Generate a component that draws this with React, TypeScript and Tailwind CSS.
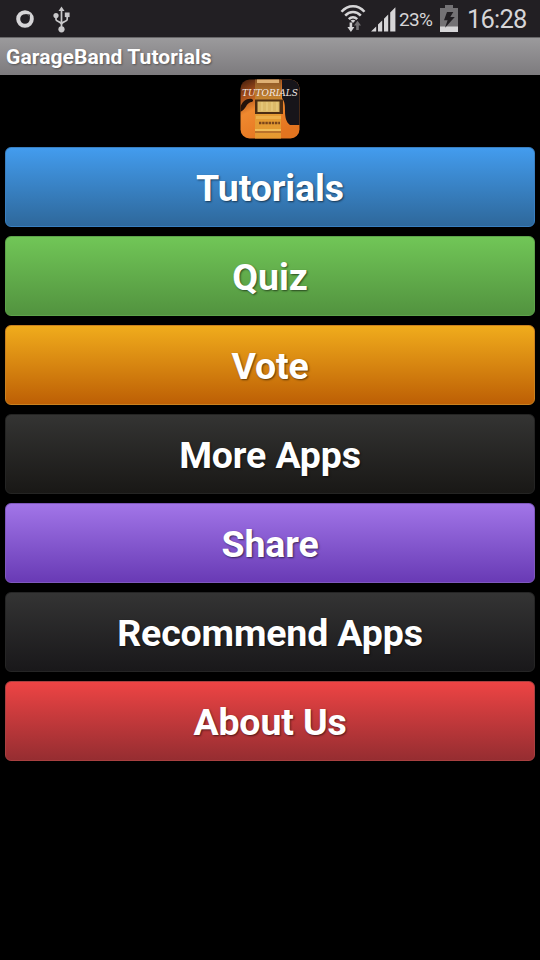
import clsx from 'clsx';

const MENU_ITEMS = [
  { label: 'Tutorials', className: 'border-[#397fc0] from-[#439cee] to-[#2e689b]' },
  { label: 'Quiz', className: 'border-[#5da34a] from-[#71c657] to-[#52933f]' },
  { label: 'Vote', className: 'border-[#c9801f] from-[#f0ac1c] to-[#bd5f05]' },
  { label: 'More Apps', className: 'border-[#242423] from-[#343433] to-[#191816]' },
  { label: 'Share', className: 'border-[#7e58bd] from-[#a275e8] to-[#693ab5]' },
  { label: 'Recommend Apps', className: 'border-[#252525] from-[#343434] to-[#19181a]' },
  { label: 'About Us', className: 'border-[#a84040] from-[#ee4444] to-[#962d31]' },
];

function RingIcon() {
  return (
    <svg width="18" height="18" viewBox="0 0 18 18" fill="none">
      <circle cx="9" cy="9" r="6.8" stroke="#d6d5d7" strokeWidth="4" />
      <path d="M9 4.2 14 4.6 13.6 9z" fill="#221f23" />
      <path d="m12.6 5.6 1.8-1.8" stroke="#8d8b8e" strokeWidth="0.8" />
    </svg>
  );
}

function UsbIcon() {
  return (
    <svg width="18" height="27" viewBox="0 0 18 27" fill="none" stroke="#c9c8ca" strokeWidth="1.7">
      <path d="M8.5 4v19M3 9.5v4c0 2 5.5 2 5.5 5M14.2 8.5v5c0 2-5.7 2-5.7 5" />
      <path d="M8.5 0.5 11.5 5H5.5z" fill="#c9c8ca" stroke="none" />
      <circle cx="3" cy="9.5" r="2.6" fill="#c9c8ca" stroke="none" />
      <path d="M11.8 6.5h4.8v4.6h-4.8z" fill="#c9c8ca" stroke="none" />
      <circle cx="8.5" cy="23.3" r="3.1" fill="#c9c8ca" stroke="none" />
    </svg>
  );
}

function WifiIcon() {
  return (
    <svg width="26" height="28" viewBox="0 0 26 28" fill="none">
      <g stroke="#d6d5d7" strokeWidth="2.5">
        <path d="M1.5 6.8C8-.6 18-.6 24.5 6.8" />
        <path d="M5.2 10.6c4.5-4.8 11.1-4.8 15.6 0" />
        <path d="M8.8 14.2c2.5-2.6 5.9-2.6 8.4 0" />
      </g>
      <path d="M10.6 15.6c1.5-1.2 3.3-1.2 4.8 0L13 18z" fill="#d6d5d7" />
      <path d="M9.6 17.5h2.6v4.6h2.2L10.9 27l-3.5-4.9h2.2z" fill="#d6d5d7" />
      <path d="M16.2 25v-4.4H14l3.5-4.8 3.5 4.8h-2.2V25z" fill="#747275" />
    </svg>
  );
}

function SignalIcon() {
  return (
    <svg width="25" height="25" viewBox="0 0 25 25" fill="#d6d5d7">
      <path d="M0 24.5 5.2 19.5v5zM7 17.5l4.2-4v11H7zM13 11.8l4.2-4.2v16.9H13zM19.2 5.5 24.4.3v24.2h-5.2z" />
    </svg>
  );
}

function BatteryIcon() {
  return (
    <svg width="18" height="27" viewBox="0 0 18 27">
      <path d="M5 0h8v3h5v24H0V3h5z" fill="#747275" />
      <path d="M0 21.5h18V27H0z" fill="#d6d5d7" />
      <path d="M7 7h6.3l-3 5h4.5L5 22.8l2.6-7.6H4z" fill="#211e22" />
    </svg>
  );
}

function StatusBar() {
  return (
    <div className="flex h-[37px] items-start bg-[#221f23] text-[#d6d5d7]">
      <div className="flex gap-[19px] pl-4">
        <div className="pt-[10px]">
          <RingIcon />
        </div>
        <div className="pt-[6px]">
          <UsbIcon />
        </div>
      </div>
      <div className="ml-auto flex">
        <div className="pt-[5px]">
          <WifiIcon />
        </div>
        <div className="ml-[5px] pt-[7px]">
          <SignalIcon />
        </div>
        <span className="ml-[3px] w-[33px] pt-[9px] text-[19px] leading-[22px] tracking-[-0.7px]">23%</span>
        <div className="ml-[8px] pt-[5px]">
          <BatteryIcon />
        </div>
        <span className="ml-[9px] w-[73px] pt-[5px] text-[25.5px] leading-7 tracking-[-0.8px]">16:28</span>
      </div>
    </div>
  );
}

function AppLogo() {
  return (
    <svg width="60" height="60" viewBox="0 0 60 60">
      <defs>
        <linearGradient id="body" x1="0" y1="0" x2="0.5" y2="1">
          <stop offset="0" stopColor="#3a1a0c" />
          <stop offset="0.25" stopColor="#a04a1a" />
          <stop offset="0.5" stopColor="#f0892f" />
          <stop offset="1" stopColor="#e2741f" />
        </linearGradient>
        <linearGradient id="neck" x1="0" y1="0" x2="0" y2="1">
          <stop offset="0" stopColor="#8a5426" />
          <stop offset="0.5" stopColor="#e39c35" />
          <stop offset="1" stopColor="#e59a30" />
        </linearGradient>
        <clipPath id="frame">
          <rect x="0.5" y="0.5" width="59" height="59" rx="9" />
        </clipPath>
      </defs>
      <g clipPath="url(#frame)">
        <rect width="60" height="60" fill="url(#body)" />
        <path d="M42 0h18v46H50c-4-3-5-8-5-14 0-5 0-9-3-13z" fill="#17151a" />
        <path d="M0 29c2-7 7-10 12-9 2 1 1 3-1 3-5 1-5 8-11 10z" fill="#24120a" />
        <path d="M15 0h26v60H15z" fill="url(#neck)" />
        <path d="M17 0h22v4H17z" fill="#dfb174" />
        <path d="M15 20.5h28V35H15z" fill="#4b2c12" />
        <path d="M17.5 22.5h22V33h-22z" fill="#dcb968" />
        <path d="M22 23v9M27 23v9M32 23v9M37 23v9" stroke="#efd68e" strokeWidth="0.8" />
        <path d="M16 37h25v3H16z" fill="#edb04a" />
        <path d="M19 44h21" stroke="#7a451b" strokeWidth="2.6" strokeDasharray="2.4 0.8" />
        <path d="M15 50h26v2H15z" fill="#f0bd59" />
        <path d="M15 52h26v2H15z" fill="#b8732a" />
      </g>
      <text
        x="2"
        y="17"
        textLength="56"
        lengthAdjust="spacingAndGlyphs"
        fill="#f3e9e4"
        className="font-['DejaVu_Serif',serif] text-[9.5px] italic"
      >
        TUTORIALS
      </text>
    </svg>
  );
}

export default function App() {
  return (
    <div className="flex h-[960px] w-[540px] flex-col overflow-hidden bg-black font-[Roboto,sans-serif]">
      <StatusBar />

      <header className="flex h-[38px] items-center border-t border-[#686769] bg-linear-to-b from-[#9b9a9c] to-[#7d7b7e] pl-[6px]">
        <h1 className="text-[21px] leading-6 font-bold tracking-[0.08px] text-white [text-shadow:1px_1px_2px_#00000060]">
          GarageBand Tutorials
        </h1>
      </header>

      <div className="flex justify-center pt-1">
        <AppLogo />
      </div>

      <nav className="flex flex-col gap-[9px] px-[5px] pt-2">
        {MENU_ITEMS.map((item) => (
          <button
            key={item.label}
            className={clsx(
              'h-20 rounded-md border bg-linear-to-b pt-[2px] text-[37.5px] leading-10 font-bold tracking-[-0.15px] text-white [text-shadow:1px_1px_2px_#00000090]',
              item.className
            )}
          >
            {item.label}
          </button>
        ))}
      </nav>
    </div>
  );
}
